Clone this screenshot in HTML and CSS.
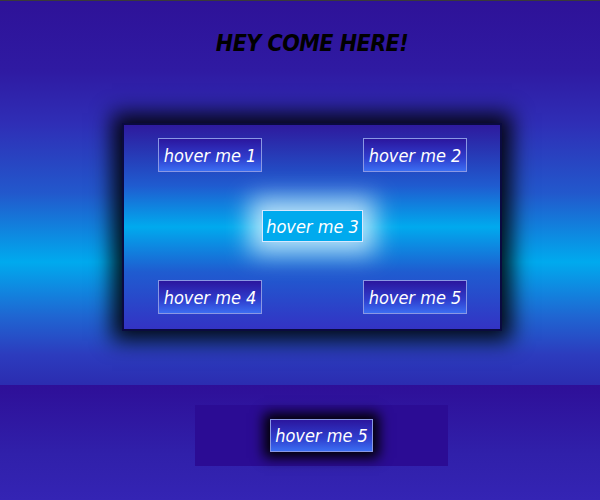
FILE: index.html
```html
<!DOCTYPE html>
<html>
<head>
<meta charset="utf-8">
<link rel="stylesheet" href="styles.css">
</head>
<body>
<section class="stage">
  <h1 class="title">HEY COME HERE!</h1>
  <div class="card">
    <div class="grid">
      <button class="btn b1">hover me 1</button>
      <button class="btn b2">hover me 2</button>
      <button class="btn glow b3">hover me 3</button>
      <button class="btn b4">hover me 4</button>
      <button class="btn b5">hover me 5</button>
    </div>
  </div>
</section>
<section class="lower">
  <div class="box">
    <button class="btn dark">hover me 5</button>
  </div>
</section>
</body>
</html>
```

FILE: styles.css
```css
html, body {
  margin: 0;
  padding: 0;
}
body {
  width: 600px;
  height: 500px;
  overflow: hidden;
  background: #3424b4;
  font-family: "DejaVu Sans Condensed", "DejaVu Sans", sans-serif;
  border-top: 1px solid #3a3a3a;
  box-sizing: border-box;
}
.stage {
  height: 384px;
  background: linear-gradient(#2e1298 0%, #2f1aa2 18%, #2f2eb6 32%, #2258cc 50%, #00aaee 68%, #1f66d2 82%, #2c3cbe 92%, #2b2cb0 100%);
  padding-top: 27px;
  box-sizing: border-box;
}
.title {
  margin: 0 0 0 24px;
  text-align: center;
  font-family: "DejaVu Sans Condensed", "DejaVu Sans", sans-serif;
  font-size: 23px;
  letter-spacing: -0.5px;
  font-weight: bold;
  font-style: italic;
  color: #000;
  line-height: 30px;
  height: 30px;
}
.card {
  margin: 65px 0 0 122px;
  width: 380px;
  height: 208px;
  box-sizing: border-box;
  border: 2px solid #0a0a40;
  background: linear-gradient(#2e1a9e 0%, #1f5cd0 30%, #00aaee 50%, #1f5cd0 72%, #3333c4 100%);
  box-shadow: 0 0 20px 10px rgba(0, 0, 0, 0.9);
  padding: 13px 34px 0 34px;
}
.grid {
  display: grid;
  grid-template-columns: 104px 101px 104px;
  grid-template-rows: 34px 32px 34px;
  justify-content: space-between;
  row-gap: 38px;
  column-gap: 0;
}
.btn {
  margin: 0;
  padding: 0;
  font-family: "DejaVu Sans Condensed", "DejaVu Sans", sans-serif;
  font-style: italic;
  font-size: 18px;
  color: #fff;
  border: 1px solid #8a98e4;
  background: linear-gradient(#2b169e 0%, #2f3fcf 60%, #3b6ef2 100%);
  width: 104px;
  height: 34px;
  white-space: nowrap;
}
.b1 { grid-column: 1; grid-row: 1; }
.b2 { grid-column: 3; grid-row: 1; }
.b3 { grid-column: 2; grid-row: 2; }
.b4 { grid-column: 1; grid-row: 3; }
.b5 { grid-column: 3; grid-row: 3; }
.glow {
  width: 101px;
  height: 32px;
  background: #00aaee;
  border-color: #d8e8ff;
  box-shadow: 0 0 24px 12px rgba(255, 255, 255, 0.7);
}
.lower {
  height: 115px;
  padding-top: 20px;
  box-sizing: border-box;
  background: linear-gradient(#2e0f98 0%, #3020aa 60%, #3424b4 100%);
}
.box {
  margin-left: 195px;
  width: 253px;
  height: 61px;
  background: #2b0c94;
  display: flex;
  align-items: center;
  justify-content: center;
}
.dark {
  width: 103px;
  height: 33px;
  box-shadow: 0 0 12px 6px #000;
}
```
